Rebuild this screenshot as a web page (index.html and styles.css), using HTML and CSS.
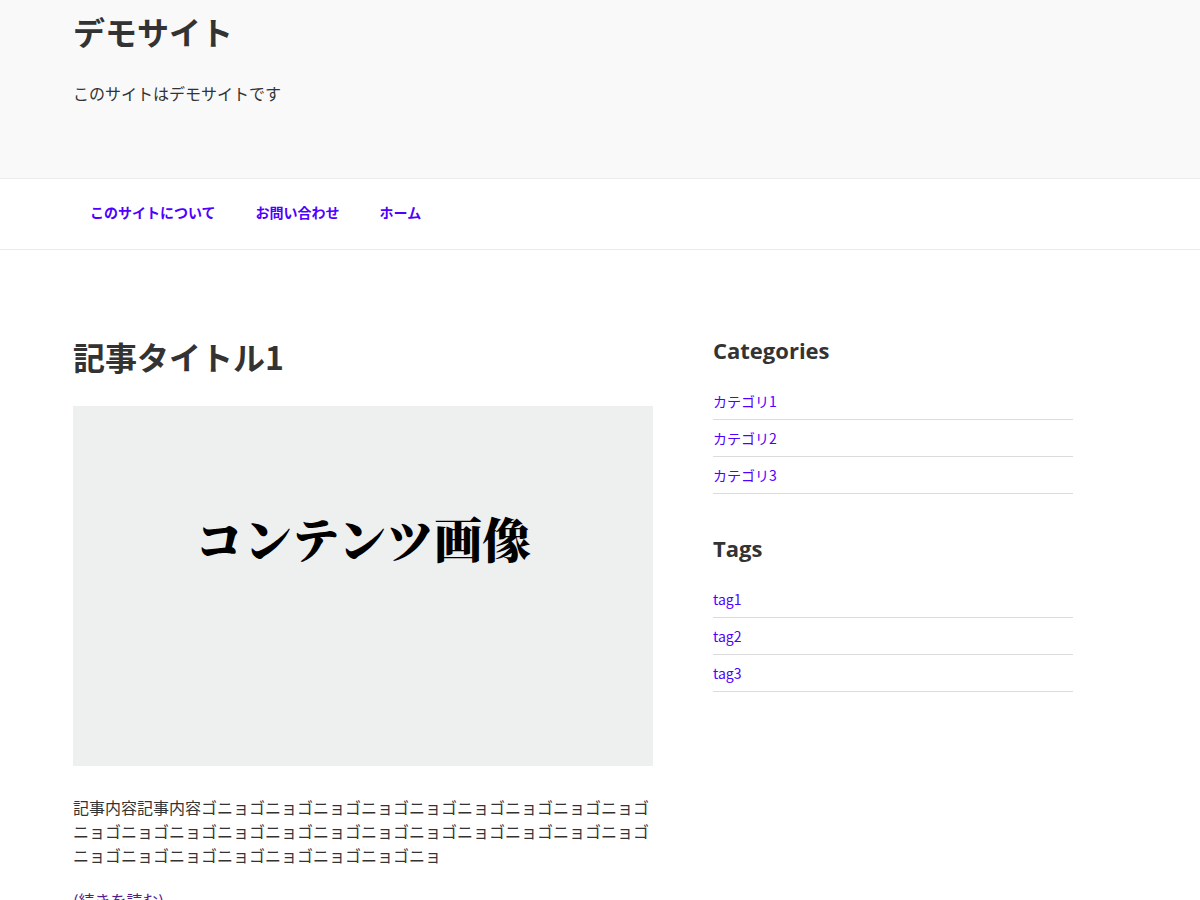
FILE: index.html
```html
<!DOCTYPE html>
<html lang="ja">
<head>
<meta charset="utf-8">
<title>デモサイト</title>
<link rel="stylesheet" href="styles.css">
</head>
<body>
<header class="site-header">
  <div class="inner">
    <h1 class="site-title">デモサイト</h1>
    <p class="site-desc">このサイトはデモサイトです</p>
  </div>
</header>
<nav class="site-nav">
  <ul class="nav-list">
    <li><a href="#">このサイトについて</a></li>
    <li><a href="#">お問い合わせ</a></li>
    <li><a href="#">ホーム</a></li>
  </ul>
</nav>
<div class="content">
  <main class="main">
    <article>
      <h2 class="entry-title">記事タイトル1</h2>
      <div class="thumb"><span>コンテンツ画像</span></div>
      <p class="entry-body">記事内容記事内容ゴニョゴニョゴニョゴニョゴニョゴニョゴニョゴニョゴニョゴニョゴニョゴニョゴニョゴニョゴニョゴニョゴニョゴニョゴニョゴニョゴニョゴニョゴニョゴニョゴニョゴニョゴニョゴニョゴニョ</p>
      <p class="more"><a href="#">(続きを読む)</a></p>
    </article>
  </main>
  <aside class="sidebar">
    <section class="widget">
      <h3 class="widget-title">Categories</h3>
      <ul class="widget-list">
        <li><a href="#">カテゴリ1</a></li>
        <li><a href="#">カテゴリ2</a></li>
        <li><a href="#">カテゴリ3</a></li>
      </ul>
    </section>
    <section class="widget">
      <h3 class="widget-title">Tags</h3>
      <ul class="widget-list">
        <li><a href="#">tag1</a></li>
        <li><a href="#">tag2</a></li>
        <li><a href="#">tag3</a></li>
      </ul>
    </section>
  </aside>
</div>
</body>
</html>
```

FILE: styles.css
```css
* { box-sizing: border-box; }
html, body { margin: 0; padding: 0; }
body {
  font-family: "Noto Sans CJK JP", "Open Sans", sans-serif;
  color: #333;
  background: #fff;
}
a { color: #5000ff; text-decoration: none; }

.site-header {
  background: #f9f9f9;
  height: 179px;
  border-bottom: 1px solid #ebebeb;
}
.site-header .inner { padding: 9px 0 0 73px; }
.site-title {
  margin: 0;
  font-size: 32px;
  line-height: 44px;
  font-weight: 700;
  color: #333;
}
.site-desc {
  margin: 28px 0 0;
  font-size: 16px;
  line-height: 24px;
}

.site-nav {
  height: 71px;
  border-bottom: 1px solid #ebebeb;
}
.nav-list {
  list-style: none;
  margin: 0;
  padding: 0 0 4px 73px;
  display: flex;
  height: 70px;
  align-items: center;
}
.nav-list a {
  display: block;
  padding: 0 20px 0 17px;
  margin-right: 3px;
  font-size: 14px;
  font-weight: 700;
  line-height: 20px;
}

.content {
  display: flex;
  gap: 60px;
  padding: 82px 0 0 73px;
}
.main { width: 580px; }
.entry-title {
  margin: 0;
  font-size: 32px;
  line-height: 48px;
  font-weight: 700;
}
.thumb {
  margin-top: 26px;
  height: 360px;
  background: #eeefef;
  display: flex;
  align-items: flex-start;
  justify-content: center;
  padding-top: 102px;
}
.thumb span {
  font-family: "Noto Serif CJK JP", "Liberation Serif", serif;
  font-weight: 900;
  font-size: 48px;
  line-height: 60px;
  letter-spacing: 0.3px;
  color: #000;
}
.entry-body {
  margin: 29px 0 0;
  font-size: 16px;
  line-height: 24px;
  word-break: break-all;
}
.more { margin: 21px 0 0; font-size: 16px; line-height: 24px; }
.more a { color: #551a8b; }

.sidebar { width: 360px; padding-top: 1px; }
.widget { margin-bottom: 37px; }
.widget-title {
  margin: 0 0 16px;
  font-family: "Open Sans", "Noto Sans CJK JP", sans-serif;
  font-size: 22px;
  line-height: 34px;
  font-weight: 700;
  color: #333;
}
.widget-list { list-style: none; margin: 0; padding: 0; }
.widget-list li {
  border-bottom: 1px solid #dcdcdc;
  height: 37px;
  display: flex;
  align-items: center;
}
.widget-list a { font-size: 14px; line-height: 20px; }
```
